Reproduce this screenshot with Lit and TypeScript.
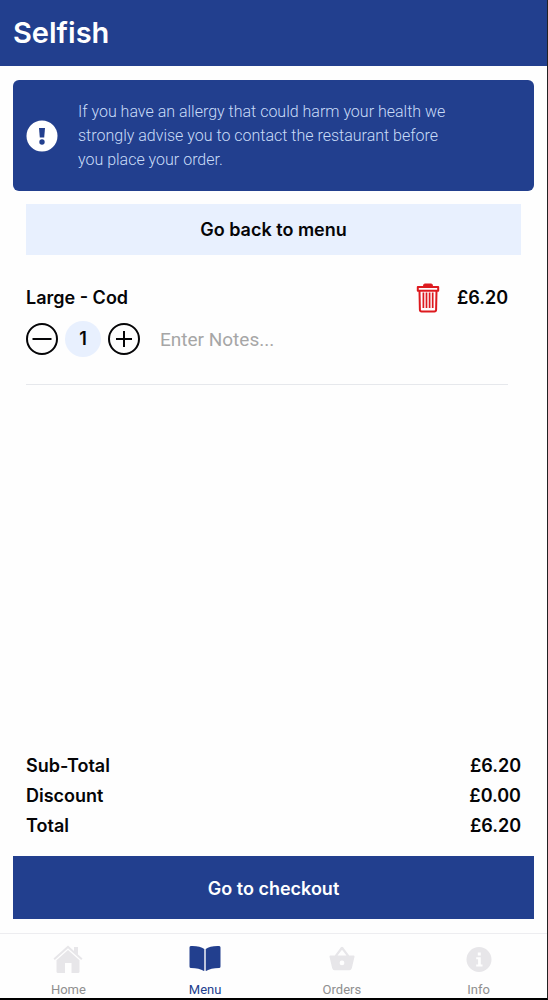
import { LitElement, html, css, svg } from "lit";
import { customElement, state } from "lit/decorators.js";
import { classMap } from "lit/directives/class-map.js";

const money = (n: number) => `£${n.toFixed(2)}`;

const icons = {
  Home: svg`<svg viewBox="0 0 32 30" width="32" height="30" fill="currentColor" aria-hidden="true">
    <path d="M16 1.500 1.500 14.500l1.300 1.400L16 4.200 29.200 15.900l1.300-1.400-4.500-4V3h-4v3.900z"/>
    <path d="M16 6 4.500 16.200V27.500q0 1.500 1.500 1.500H13V19h6.500v10H26q1.500 0 1.500-1.500V16.200z"/></svg>`,
  Menu: svg`<svg viewBox="0 0 32 30" width="32" height="30" fill="currentColor" aria-hidden="true">
    <path d="M15.300 5C12.500 2.600 7.500 1.800 1.800 2Q.5 2.100.5 3.500v19q0 1.500 1.500 1.500c5.500.2 10 1 12.500 2.800q.8.500.8-.4z"/>
    <path d="M16.700 5C19.500 2.600 24.500 1.800 30.200 2q1.300.1 1.300 1.500v19q0 1.500-1.500 1.500c-5.500.2-10 1-12.500 2.800q-.8.500-.8-.4z"/></svg>`,
  Orders: svg`<svg viewBox="0 0 32 30" width="32" height="30" fill="currentColor" fill-rule="evenodd" aria-hidden="true">
    <path d="M4.500 11.500h4.300L14.900 3.300q1.100-1.200 2.200 0l6.100 8.200h4.300q1.200 0 1 1.200l-2.700 11.600Q25.200 26.300 23.400 26.300H8.600q-1.800 0-2.400-2L3.500 12.700q-.2-1.200 1-1.200zm7 0h9L16 5.700zm4.500 5a2.400 2.400 0 1 0 0 4.800 2.400 2.400 0 0 0 0-4.800z"/></svg>`,
  Info: svg`<svg viewBox="0 0 32 30" width="32" height="30" fill="currentColor" fill-rule="evenodd" aria-hidden="true">
    <path d="M16 3a12.500 12.500 0 1 0 0 25 12.500 12.500 0 0 0 0-25zm-1.200 5.500h3v3h-3zM13.200 13.300h4.600v7.200h1.700v1.900h-6.300v-1.900h1.900v-5.300h-1.900z"/></svg>`,
};

type Tab = keyof typeof icons;

@customElement("tab-bar")
class TabBar extends LitElement {
  @state() private active: Tab = "Menu";

  static styles = css`
    .bar { display: grid; grid-template-columns: repeat(4, 1fr); border-top: 1px solid #ededf0; }
    .tab { display: flex; flex-direction: column; align-items: center; gap: 8px; padding: 10px 0 0;
      color: #e7e6e9; text-decoration: none; }
    .label { color: #8f8f8f; font-size: 13px; line-height: 16px; }
    .active, .active .label { color: #223f8e; }
    svg { display: block; }
  `;

  render() {
    return html`<nav class="bar" aria-label="Main">
      ${(Object.keys(icons) as Tab[]).map(
        (t) => html`<a href="#${t.toLowerCase()}" class=${classMap({ tab: true, active: t === this.active })}
          @click=${() => (this.active = t)}>${icons[t]}<span class="label">${t}</span></a>`
      )}
    </nav>`;
  }
}

@customElement("app-root")
class AppRoot extends LitElement {
  @state() private quantity = 1;
  private price = 6.2;

  static styles = css`
    :host { display: flex; flex-direction: column; box-sizing: border-box; min-height: 100vh;
      background: #fefefe; border-right: 1px solid #222; border-bottom: 2px solid #000;
      color: #050507; font-family: Roboto, sans-serif; }
    .header { background: #223f8e; padding: 13px; }
    .title { margin: 0; color: #fff; font: 600 29px/40px Inter, sans-serif; }
    .main { flex: 1; display: flex; flex-direction: column; padding: 14px 13px; }
    .notice { display: flex; align-items: center; gap: 20px; padding: 20px 72px 19px 13px;
      border-radius: 6px; background: #223f8e; }
    .notice svg { flex: none; }
    .notice-text { margin: 0; color: #c9dcf8; font-size: 16px; line-height: 24px; font-weight: 300; }
    .strong { font: 600 18px/30px Inter, sans-serif; }
    .btn { border: 0; padding: 11px 10px 10px; cursor: pointer; }
    .back { margin: 13px 13px 0; background: #e8f0fe; color: #050507; }
    .item { margin: 28px 26px 0 13px; padding-bottom: 27px; border-bottom: 1px solid #e6e8ec; }
    .row { display: flex; align-items: center; }
    .name { flex: 1; }
    .icon-btn { display: block; border: 0; padding: 0; background: none; color: inherit; cursor: pointer; }
    .icon-btn svg { display: block; }
    .trash { margin-right: 17px; color: #dd1a1f; }
    .stepper { display: flex; align-items: center; gap: 7px; }
    .qty { width: 36px; height: 36px; line-height: 36px; border-radius: 50%; background: #e8f0fe; text-align: center; }
    .controls { margin-top: 8px; gap: 20px; }
    .notes { flex: 1; min-width: 0; border: 0; padding: 2px 0 0; background: none; outline: none;
      font: 19px/24px Roboto, sans-serif; color: inherit; }
    .notes::placeholder { color: #a6a6a6; opacity: 1; }
    .totals { margin: auto 13px 15px; }
    .totals .row { justify-content: space-between; }
    .totals dd { margin: 0; }
    .checkout { padding: 18px 10px 15px; background: #223f8e; color: #fff; }
  `;

  render() {
    const total = this.price * this.quantity;
    const rows: [string, number][] = [["Sub-Total", total], ["Discount", 0], ["Total", total]];
    return html`
      <header class="header"><h1 class="title">Selfish</h1></header>
      <main class="main">
        <div class="notice" role="note">
          <svg viewBox="0 0 32 32" width="32" height="32" aria-hidden="true">
            <circle cx="16" cy="16" r="15.500" fill="#fff"/>
            <path d="M13 8h6l-.8 9.500h-4.400z" fill="#223f8e"/>
            <circle cx="16" cy="22" r="2.700" fill="#223f8e"/>
          </svg>
          <p class="notice-text">If you have an allergy that could harm your health we strongly advise you to contact the restaurant before you place your order.</p>
        </div>
        <button class="btn back strong">Go back to menu</button>
        <section class="item">
          <div class="row strong">
            <span class="name">Large - Cod</span>
            <button class="icon-btn trash" aria-label="Remove">
              <svg viewBox="0 0 24 30" width="24" height="30" fill="none" stroke="currentColor" aria-hidden="true">
                <path d="M7.500 3V2.500q0-1.500 1.500-1.500h6q1.500 0 1.500 1.500V3z" fill="currentColor"/>
                <path d="M1.800 4h20.400v3.800H1.800z" stroke-width="2" stroke-linejoin="round"/>
                <path d="M3.500 8l.4 18.800q.1 1.700 1.700 1.700h12.800q1.600 0 1.700-1.700L20.500 8" stroke-width="2"/>
                <path d="M7.400 9.500V25M10.500 9.500V25M13.600 9.500V25M16.700 9.500V25" stroke-width="1.700"/>
              </svg>
            </button>
            <span>${money(this.price)}</span>
          </div>
          <div class="row controls">
            <div class="stepper">
              <button class="icon-btn" aria-label="Decrease quantity" @click=${() => (this.quantity = Math.max(1, this.quantity - 1))}>
                <svg viewBox="0 0 32 32" width="32" height="32" fill="none" stroke="currentColor" stroke-width="2">
                  <circle cx="16" cy="16" r="15"/><path d="M6.500 16h19"/></svg>
              </button>
              <output class="qty strong">${this.quantity}</output>
              <button class="icon-btn" aria-label="Increase quantity" @click=${() => this.quantity++}>
                <svg viewBox="0 0 32 32" width="32" height="32" fill="none" stroke="currentColor" stroke-width="2">
                  <circle cx="16" cy="16" r="15"/><path d="M8 16h16M16 8v16"/></svg>
              </button>
            </div>
            <input class="notes" type="text" placeholder="Enter Notes..." aria-label="Notes">
          </div>
        </section>
        <dl class="totals strong">
          ${rows.map(([label, value]) => html`<div class="row"><dt>${label}</dt><dd>${money(value)}</dd></div>`)}
        </dl>
        <button class="btn checkout strong">Go to checkout</button>
      </main>
      <tab-bar></tab-bar>
    `;
  }
}
